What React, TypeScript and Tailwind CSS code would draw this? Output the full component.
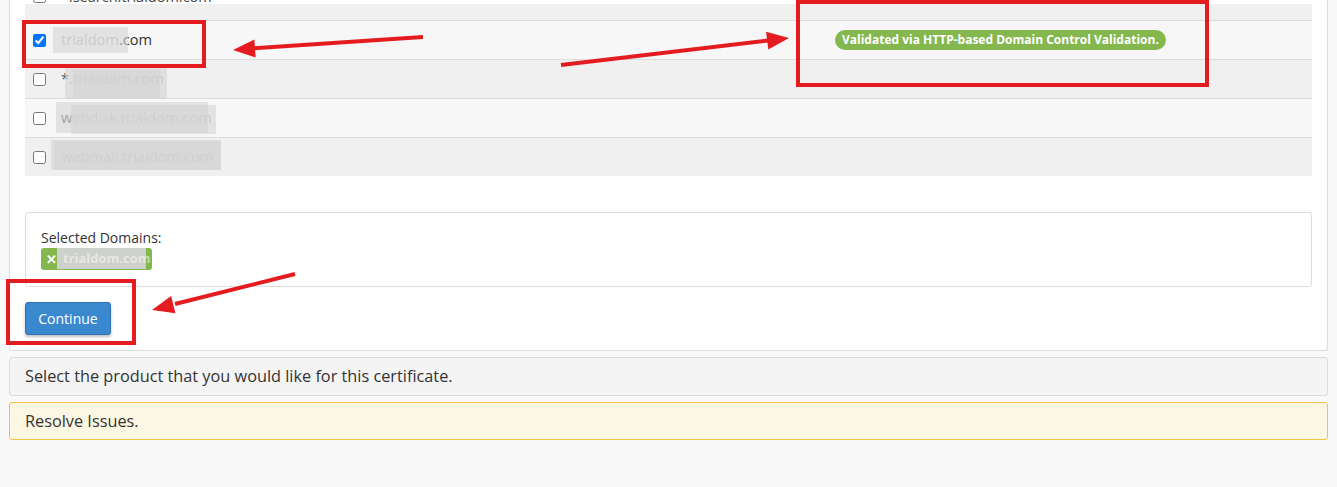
import React from "react";

type DomainRow = {
  lead?: string;
  name: string;
  checked?: boolean;
  masks: { left: number; width: number; top: number; height: number }[];
};

const rows: DomainRow[] = [
  {
    name: "trialdom",
    checked: true,
    masks: [{ left: 53, width: 75, top: 6, height: 26 }],
  },
  {
    lead: "*",
    name: ".trialdom.com",
    masks: [
      { left: 65, width: 102, top: 7, height: 33 },
      { left: 73, width: 87, top: 10, height: 28 },
    ],
  },
  {
    lead: "w",
    name: "ebdisk.trialdom.com",
    masks: [
      { left: 56, width: 152, top: 3, height: 31 },
      { left: 71, width: 145, top: 6, height: 29 },
    ],
  },
  {
    name: "webmail.trialdom.com",
    masks: [
      { left: 51, width: 170, top: 2, height: 30 },
      { left: 54, width: 167, top: 3, height: 29 },
    ],
  },
];

// grey redaction blocks laid over the domain names
const Mask = ({ m }: { m: DomainRow["masks"][number] }) => (
  <span
    className="pointer-events-none absolute bg-[#d4d4d4]/60"
    style={{ left: m.left - 25, top: m.top, width: m.width, height: m.height }}
  />
);

const Annotations = () => (
  <svg className="pointer-events-none absolute inset-0" width="1337" height="487" viewBox="0 0 1337 487">
    <g fill="none" stroke="#e41c1f" strokeWidth="4">
      <rect x="24" y="22" width="180" height="44" />
      <rect x="798" y="2" width="409" height="83" />
      <rect x="8" y="281" width="126" height="62" />
    </g>
    <g stroke="#e41c1f" strokeWidth="4" strokeLinecap="butt">
      <line x1="423" y1="37" x2="252" y2="48.5" />
      <line x1="561" y1="65" x2="770" y2="40.3" />
      <line x1="295" y1="274" x2="175" y2="304" />
    </g>
    <g fill="#e41c1f">
      <polygon points="233,50 255.6,57.5 254.4,39.5" />
      <polygon points="789,38 768.3,49.5 766.1,31.7" />
      <polygon points="152,310 175.5,313.3 171.1,295.9" />
    </g>
  </svg>
);

export default function App() {
  return (
    <div
      className="relative h-[487px] overflow-hidden bg-[#f9f9f9] text-[#333]"
      style={{ fontFamily: '"Open Sans", "Liberation Sans", sans-serif' }}
    >
      <div className="mx-[9px] rounded-b-[3px] border border-t-0 border-[#dcdcdc] bg-white px-[15px] pt-[4px] pb-[15px]">
        {/* domain list */}
        <div>
          <div className="flex h-[17px] flex-col border-b border-[#dcdcdc] bg-[#f0f0f0]">
            <div className="-mt-[27px] flex h-[39px] shrink-0 items-center pl-[8px]">
              <input type="checkbox" readOnly className="m-0 h-[13px] w-[13px]" />
              <span className="ml-[23px] text-[14.5px] text-[#444]">lsearch.trialdom.com</span>
            </div>
          </div>

          {rows.map((row, i) => (
            <div
              key={row.name}
              className={`relative grid grid-cols-[802px_1fr] ${
                i < rows.length - 1 ? "h-[39px] border-b border-[#dcdcdc]" : "h-[38px]"
              } ${i % 2 === 0 ? "bg-[#f7f7f7]" : "bg-[#f0f0f0]"}`}
            >
              <div className="flex items-center pl-[8px]">
                <input type="checkbox" readOnly checked={!!row.checked} className="m-0 h-[13px] w-[13px]" />
                {row.checked ? (
                  <span className="ml-[15px] text-[14.6px]">
                    <span className="text-[#bdbdbd]">{row.name}</span>.com
                  </span>
                ) : (
                  <span className="ml-[15px] text-[14.6px] text-[#b8b8b8]">
                    {row.lead && <span className="text-[#555]">{row.lead}</span>}
                    {row.name}
                  </span>
                )}
              </div>
              <div className="flex items-center pl-[8px]">
                {row.checked && (
                  <span className="flex h-[20px] items-center rounded-full bg-[#84b84f] px-[7px] text-[12px] font-bold text-white">
                    Validated via HTTP-based Domain Control Validation.
                  </span>
                )}
              </div>
              {row.masks.map((m, k) => (
                <Mask key={k} m={m} />
              ))}
            </div>
          ))}
        </div>

        {/* selected domains */}
        <div className="mt-[36px] h-[75px] rounded-[3px] border border-[#dcdcdc] px-[15px] pt-[15px]">
          <div className="text-[14px] leading-[20px]">Selected Domains:</div>
          <div className="relative flex h-[22px] w-[111px] items-center rounded-[3px] bg-[#84b84f] pl-[5px]">
            <span className="text-[13px] font-bold leading-none text-white">✕</span>
            <span className="absolute top-0 left-[16px] h-[21px] w-[89px] bg-[#ced0cc]" />
            <span className="relative ml-[6px] text-[13px] font-bold text-white/50">trialdom.com</span>
          </div>
        </div>

        <button className="mt-[15px] flex h-[33px] w-[86px] items-center justify-center rounded-[3px] border border-[#2f73b0] bg-[#3a89cf] text-[14px] text-white shadow-[0_2px_3px_rgba(0,0,0,0.25)]">
          Continue
        </button>
      </div>

      <div className="mx-[9px] mt-[6px] flex h-[39px] items-center rounded-[3px] border border-[#dcdcdc] bg-[#f4f4f4] px-[15px] text-[16.3px]">
        Select the product that you would like for this certificate.
      </div>
      <div className="mx-[9px] mt-[6px] flex h-[38px] items-center rounded-[3px] border border-[#f3c441] bg-[#fcf7e3] px-[15px] text-[16.3px]">
        Resolve Issues.
      </div>

      <Annotations />
    </div>
  );
}
